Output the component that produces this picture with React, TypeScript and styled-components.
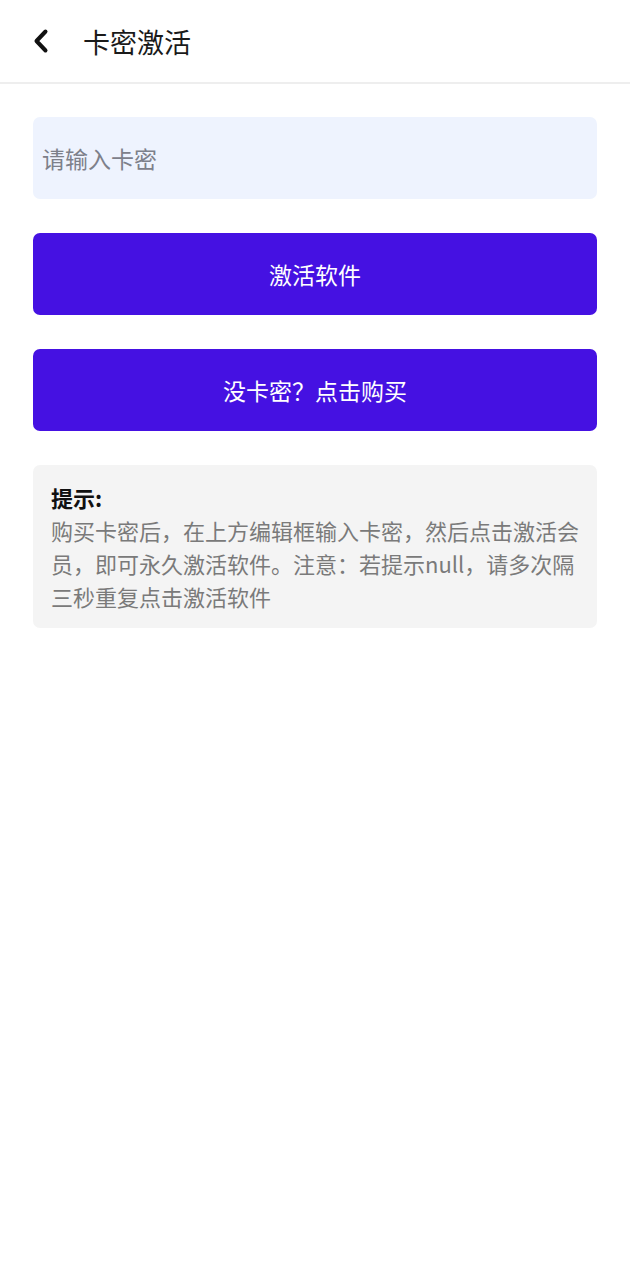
import React from 'react'
import styled, { createGlobalStyle } from 'styled-components'

const GlobalStyle = createGlobalStyle`
    body {
        margin: 0;
        background: #ffffff;
        font-family: 'Noto Sans CJK SC', 'Noto Sans', sans-serif;
    }
`;

const App = () => {
    return (
        <Page>
            <GlobalStyle />
            <Header>
                <BackButton aria-label="返回">
                    <svg width="18" height="26" viewBox="0 0 18 26" fill="none">
                        <path d="M13.5 3.5 L4.5 13 L13.5 22.5" stroke="#111" strokeWidth="4" strokeLinecap="round" strokeLinejoin="round" />
                    </svg>
                </BackButton>
                <Title>卡密激活</Title>
            </Header>
            <Content>
                <Input placeholder="请输入卡密" />
                <Button>激活软件</Button>
                <Button>没卡密？点击购买</Button>
                <Tip>
                    <TipTitle>提示:</TipTitle>
                    <TipText>
                        购买卡密后，在上方编辑框输入卡密，然后点击激活会员，即可永久激活软件。注意：若提示null，请多次隔三秒重复点击激活软件
                    </TipText>
                </Tip>
            </Content>
        </Page>
    )
}
export default App;

const Page = styled.div`
    min-height: 1280px;
    background: #ffffff;
`;

const Header = styled.div`
    height: 84px;
    display: flex;
    align-items: center;
    border-bottom: 2px solid #eeeeee;
    box-sizing: border-box;
    padding-left: 30px;
`;

const BackButton = styled.button`
    width: 22px;
    height: 30px;
    padding: 0;
    border: none;
    background: none;
    display: flex;
    align-items: center;
    justify-content: center;
    margin-right: 31px;
`;

const Title = styled.div`
    font-size: 27px;
    color: #1a1a1a;
    line-height: 1;
    margin-top: 1px;
`;

const Content = styled.div`
    display: flex;
    flex-direction: column;
    gap: 34px;
    padding: 33px 33px;
`;

const Input = styled.input`
    height: 82px;
    box-sizing: border-box;
    border: none;
    outline: none;
    border-radius: 7px;
    background: #eef3fe;
    padding: 0 9px;
    font-family: inherit;
    font-size: 23px;
    color: #333;

    &::placeholder {
        color: #7d808a;
    }
`;

const Button = styled.button`
    height: 82px;
    border: none;
    border-radius: 7px;
    background: #4511e2;
    color: #ffffff;
    font-family: inherit;
    font-size: 23px;
`;

const Tip = styled.div`
    background: #f4f4f4;
    border-radius: 7px;
    padding: 16px 16px 15px 18px;
`;

const TipTitle = styled.div`
    font-size: 22px;
    font-weight: bold;
    color: #111;
    line-height: 33px;
`;

const TipText = styled.div`
    font-size: 22px;
    color: #7a7a7a;
    line-height: 33px;
`;
